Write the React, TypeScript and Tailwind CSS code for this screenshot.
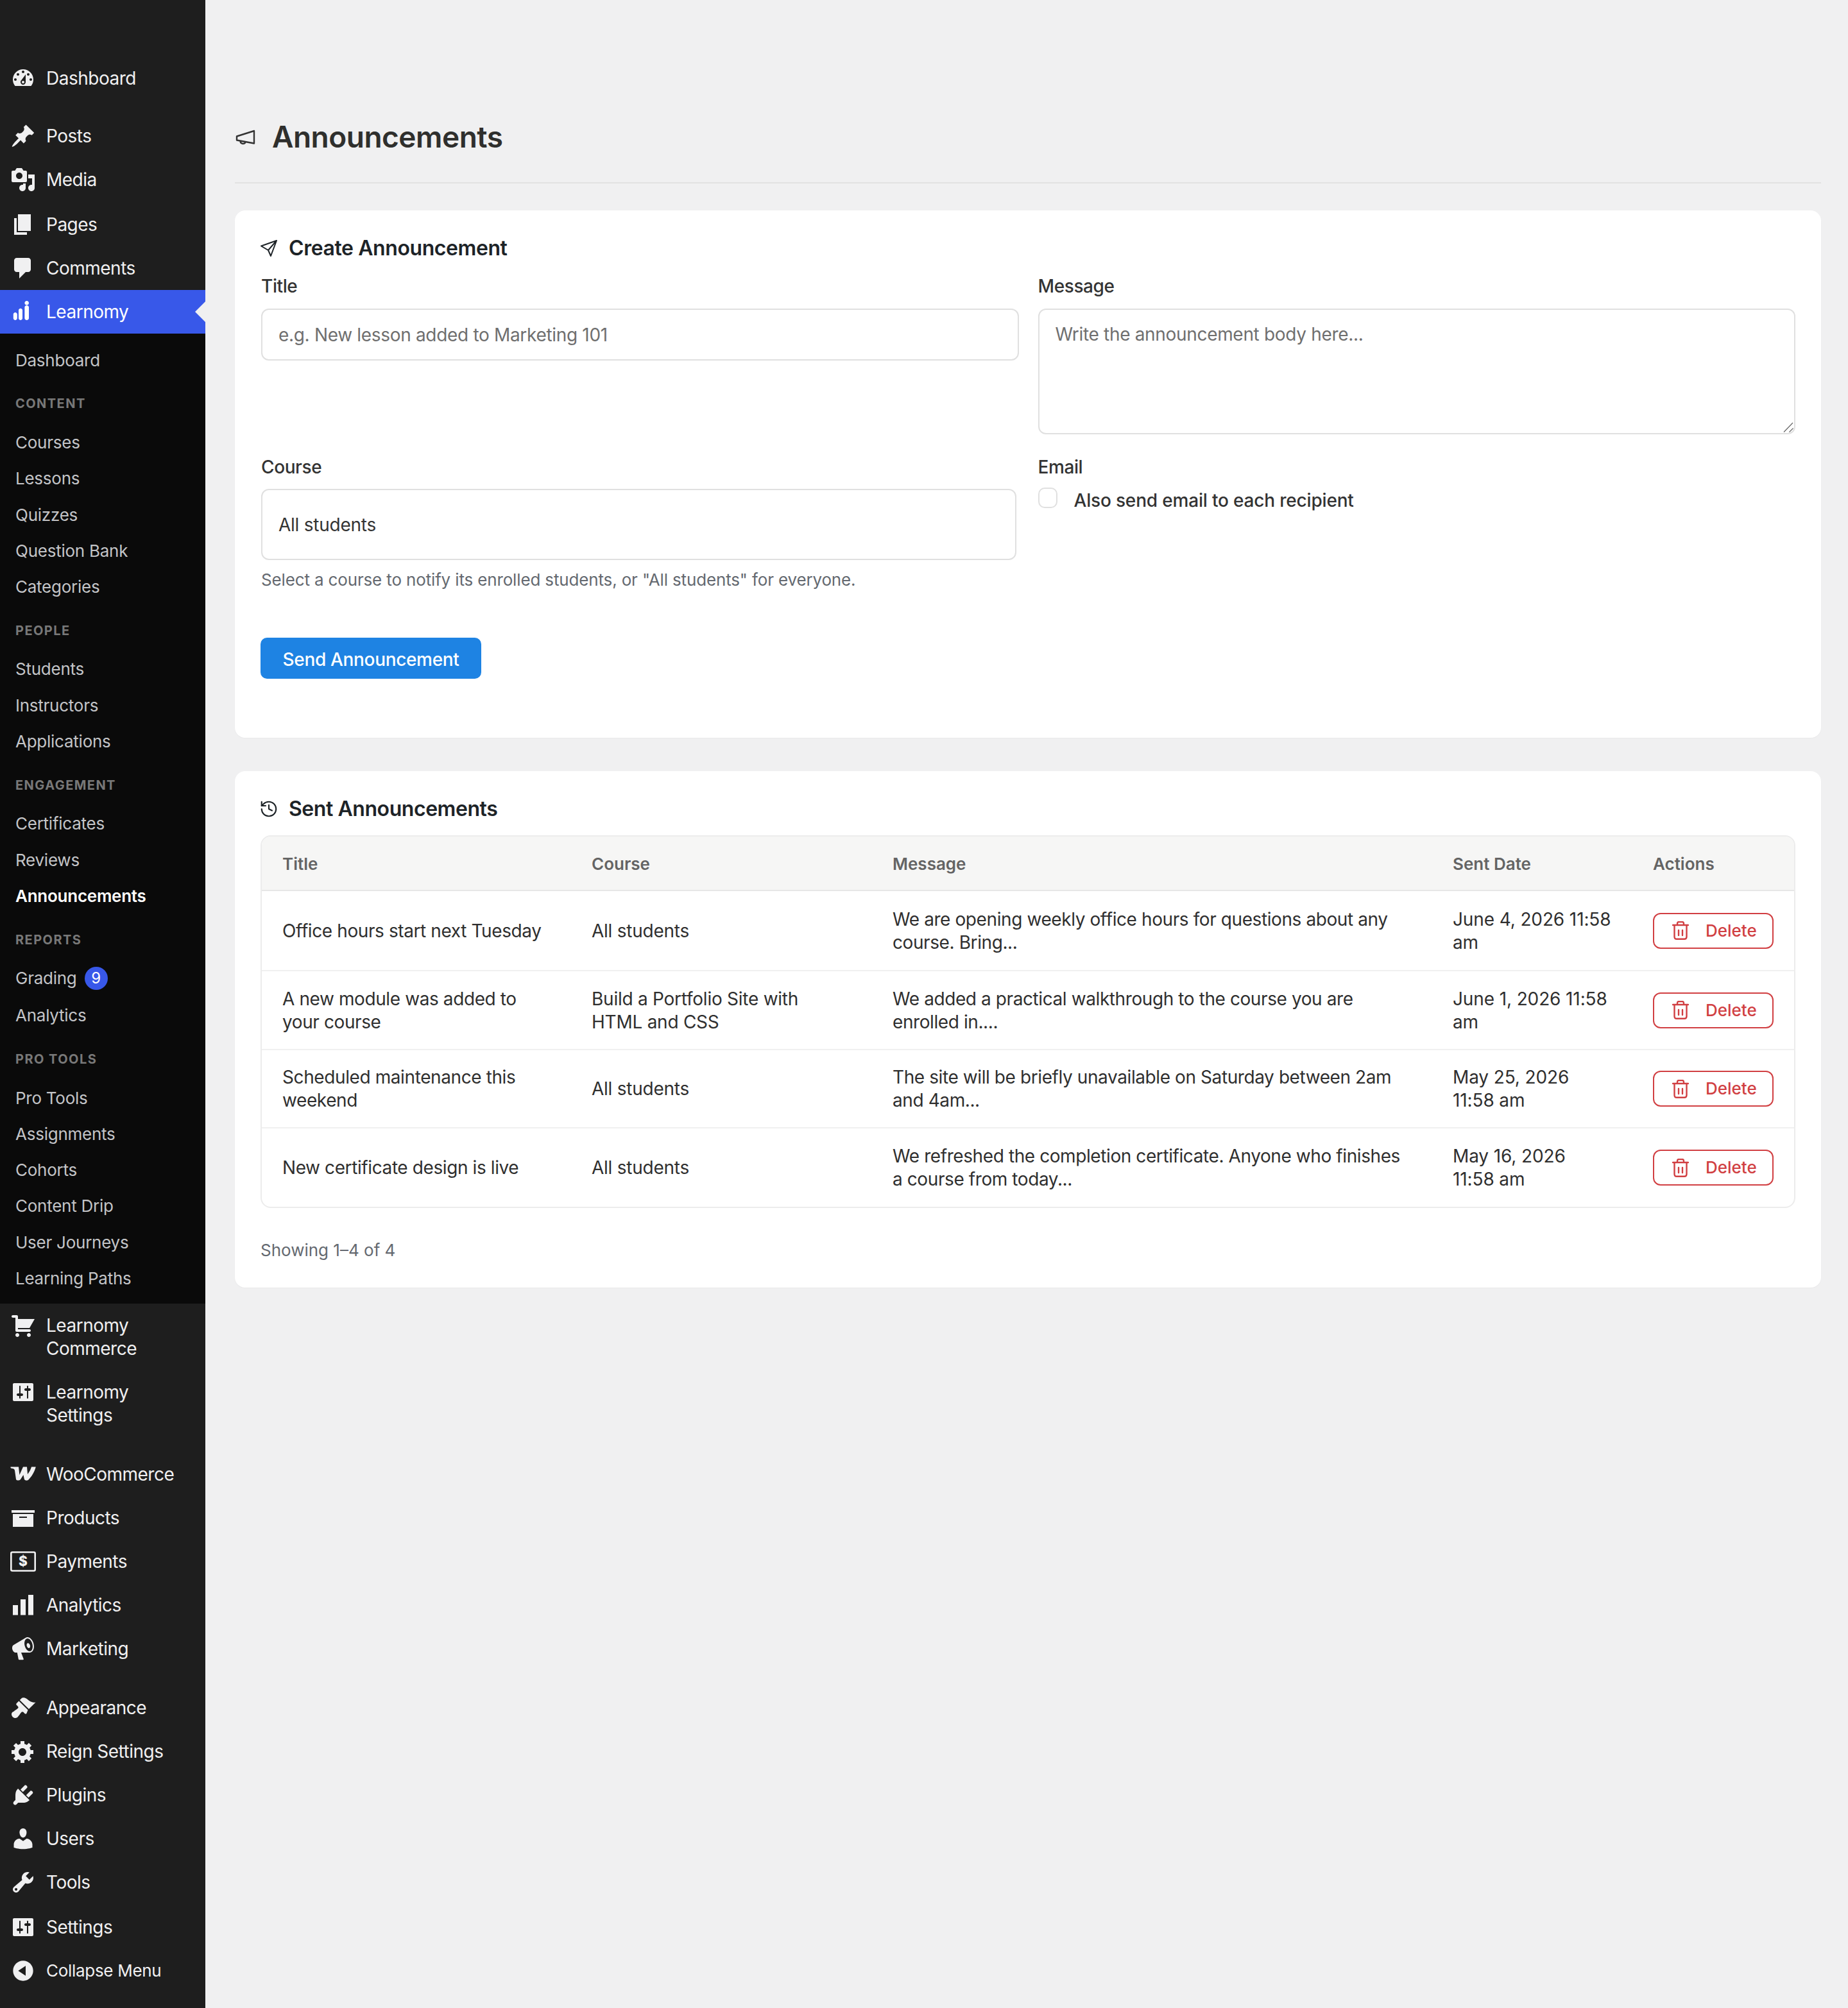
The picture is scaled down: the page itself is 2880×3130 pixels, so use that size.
import { History } from "lucide-react";
import type { ReactNode } from "react";

// dashicon-style glyphs on a 20x20 grid
const paths: Record<string, string> = {
  dashboard:
    "M3.76 16h12.48c1.1-1.37 1.76-3.11 1.76-5 0-4.42-3.58-8-8-8s-8 3.58-8 8c0 1.89.66 3.63 1.76 5zM10 4c.55 0 1 .45 1 1s-.45 1-1 1-1-.45-1-1 .45-1 1-1zM6 6c.55 0 1 .45 1 1s-.45 1-1 1-1-.45-1-1 .45-1 1-1zm8 0c.55 0 1 .45 1 1s-.45 1-1 1-1-.45-1-1 .45-1 1-1zm-5.37 5.55L12 7v6c0 1.1-.9 2-2 2s-2-.9-2-2c0-.57.24-1.08.63-1.45zM4 10c.55 0 1 .45 1 1s-.45 1-1 1-1-.45-1-1 .45-1 1-1zm12 0c.55 0 1 .45 1 1s-.45 1-1 1-1-.45-1-1 .45-1 1-1zm-5 3c0-.55-.45-1-1-1s-1 .45-1 1 .45 1 1 1 1-.45 1-1z",
  pin: "M10.44 3.02l1.82-1.82 6.36 6.35-1.83 1.82c-1.05-.68-2.48-.57-3.41.36l-.75.75c-.92.93-1.04 2.35-.35 3.41l-1.83 1.82-2.41-2.41-2.8 2.79c-.42.42-3.38 2.71-3.8 2.29s1.86-3.39 2.28-3.81l2.79-2.79L4.1 9.36l1.83-1.82c1.05.69 2.48.57 3.4-.36l.75-.75c.93-.92 1.05-2.35.36-3.41z",
  media:
    "M13 11V4c0-.55-.45-1-1-1h-1.67L9 1H5L3.67 3H2c-.55 0-1 .45-1 1v7c0 .55.45 1 1 1h10c.55 0 1-.45 1-1zM7 4.5c1.38 0 2.5 1.12 2.5 2.5S8.38 9.5 7 9.5 4.5 8.38 4.5 7 5.62 4.5 7 4.5zM14 6h5v10.5c0 1.38-1.12 2.5-2.5 2.5S14 17.88 14 16.5s1.12-2.5 2.5-2.5c.17 0 .34.02.5.05V9h-3V6zm-4 8.05V13h2v3.5c0 1.38-1.12 2.5-2.5 2.5S7 17.88 7 16.5 8.12 14 9.5 14c.17 0 .34.02.5.05z",
  page: "M6 15V2h10v13H6zm-1 1h8v2H3V5h2v11z",
  comment:
    "M5 2h9c1.1 0 2 .9 2 2v7c0 1.1-.9 2-2 2h-2l-5 5v-5H5c-1.1 0-2-.9-2-2V4c0-1.1.9-2 2-2z",
  learnomy:
    "M3.9 10.500c.8 0 1.500.7 1.500 1.500v3c0 .8-.7 1.500-1.500 1.500S2.400 15.800 2.400 15v-3c0-.8.7-1.500 1.500-1.500zM8 7.400c.8 0 1.500.7 1.500 1.500V15c0 .8-.7 1.500-1.500 1.500S6.500 15.800 6.500 15V8.900c0-.8.7-1.500 1.500-1.500zM12.850 5c.9 0 1.650.7 1.650 1.500V15c0 .8-.75 1.500-1.650 1.500S11.200 15.800 11.200 15V6.500c0-.8.75-1.500 1.650-1.500zM12.850 1.500c.9 0 1.650.7 1.650 1.600s-.75 1.600-1.650 1.600-1.650-.7-1.650-1.600.75-1.600 1.650-1.600z",
  cart: "M6 13h9c.55 0 1 .45 1 1s-.45 1-1 1H5c-.55 0-1-.45-1-1V4H2c-.55 0-1-.45-1-1s.45-1 1-1h3c.55 0 1 .45 1 1v2h13l-4 7H6v1zm-.5 3c.83 0 1.5.67 1.5 1.5S6.33 19 5.5 19 4 18.33 4 17.5 4.67 16 5.5 16zm9 0c.83 0 1.5.67 1.5 1.500s-.67 1.500-1.500 1.500-1.500-.67-1.500-1.500.67-1.500 1.500-1.500z",
  sliders:
    "M18 16V4c0-.55-.45-1-1-1H3c-.55 0-1 .45-1 1v12c0 .55.45 1 1 1h14c.55 0 1-.45 1-1zM8 11h1c.55 0 1 .45 1 1s-.45 1-1 1H8v1.500c0 .28-.22.5-.5.5s-.5-.22-.5-.5V13H6c-.55 0-1-.45-1-1s.45-1 1-1h1V5.500c0-.28.22-.5.5-.5s.5.22.5.5V11zm5-2h-1c-.55 0-1-.45-1-1s.45-1 1-1h1V5.500c0-.28.22-.5.5-.5s.5.22.5.5V7h1c.55 0 1 .45 1 1s-.45 1-1 1h-1v5.500c0 .28-.22.5-.5.5s-.5-.22-.5-.5V9z",
  woo: "M.3 4.200H6.500L7.200 10.500 10 4.200H13L13.500 10C15 8 16 6 16.500 4.200H19.900C19 8 16.500 12 14 14.500 13 15 11.500 15 11 14L10.200 10.500 8 14C7 15 5 15 4.500 14L3.500 7C3.300 6 2.500 5.500 1.500 5.500.5 5.500 0 4.800.3 4.200z",
  archive: "M19 4v2H1V4h18zM2 7h16v10H2V7zm11 3V9H7v1h6z",
  bars: "M2 10h4v7.750H2zM8 5.500h4v12.250H8zM14 2h4v15.750h-4z",
  megaphone:
    "M18.15 5.94c.46 1.62.38 3.22-.02 4.480-.42 1.280-1.260 2.180-2.300 2.480-.16.06-.26.06-.4.06-.6.1-.3.04-.4.04H8.500l1.900 5c.1.3-.1.6-.4.6H7c-.3 0-.5-.2-.6-.5l-1-5.100H4.250c-.5.06-1.080-.18-1.540-.62s-.88-1.080-1.060-1.860c-.24-.8-.2-1.560-.02-2.200.2-.62.58-1.080 1.060-1.300l9.020-5.420c.3-.2.480-.27.980-.46 1.040-.3 2.240.1 3.220.98s1.760 2.180 2.220 3.800zm-2.600 5.980c.4-.1.760-.34 1.060-.7.580-.7.860-1.760.860-3.040 0-.64-.1-1.300-.28-1.980-.34-1.360-1.020-2.500-1.780-3.240s-1.680-1.100-2.460-.88c-.82.22-1.400.96-1.700 2-.32 1.040-.28 2.360.06 3.720.38 1.360 1 2.500 1.800 3.240.78.74 1.620 1.100 2.440.88zM13.600 5.600c.7-.2 1.500.5 1.800 1.600s0 2.100-.7 2.300-1.500-.5-1.800-1.600 0-2.100.7-2.300z",
  brush:
    "M14.48 11.06L7.41 3.99l1.5-1.5c.5-.56 2.300-.47 3.510.32 1.210.8 1.430 1.280 2.910 2.100 1.180.64 2.450 1.260 4.450.85zm-.71.71L6.700 4.700 4.930 6.470c-.39.39-.39 1.020 0 1.410l1.060 1.060c.39.39.39 1.030 0 1.420-.6.6-1.430 1.110-2.210 1.690-.35.26-.7.53-1.010.84C1.430 13.250 1 14.070 1 15c0 1.660 1.340 3 3 3 .93 0 1.750-.43 2.250-1.360.31-.31.58-.66.84-1.010.58-.78 1.090-1.610 1.690-2.210.39-.39 1.030-.39 1.420 0l1.060 1.060c.39.39 1.020.39 1.410 0z",
  gear: "M18 12h-2.180c-.17.7-.44 1.350-.81 1.930l1.540 1.540-2.100 2.100-1.540-1.540c-.58.36-1.230.63-1.910.79V19H8v-2.180c-.68-.16-1.330-.43-1.910-.79l-1.540 1.540-2.120-2.120 1.540-1.540c-.36-.58-.63-1.230-.79-1.910H1V9.030h2.170c.16-.7.44-1.350.8-1.940L2.430 5.550l2.100-2.100 1.540 1.540c.58-.37 1.240-.64 1.930-.81V2h3v2.180c.68.16 1.330.43 1.910.79l1.540-1.540 2.120 2.120-1.540 1.540c.36.59.64 1.240.8 1.940H18V12zm-8.500 1.500c1.660 0 3-1.340 3-3s-1.340-3-3-3-3 1.340-3 3 1.340 3 3 3z",
  plug: "M13.110 4.360L9.870 7.600 8 5.730l3.240-3.240c.35-.34 1.050-.2 1.560.32.52.51.66 1.210.31 1.550zm-8 1.770l.91-1.120 9.010 9.010-1.190.84c-.71.71-2.630 1.160-3.820 1.160H6.140L4.900 17.260c-.59.59-1.540.59-2.120 0-.59-.58-.59-1.530 0-2.120l1.240-1.240v-3.880c0-1.130.4-3.190 1.090-3.890zm7.260 3.970l3.240-3.240c.34-.35 1.040-.21 1.550.31.52.51.66 1.210.31 1.550l-3.240 3.250z",
  user: "M10 9.250c-2.270 0-2.730-3.440-2.730-3.440C7 4.020 7.820 2 9.970 2c2.160 0 2.980 2.020 2.710 3.810 0 0-.41 3.440-2.680 3.440zm0 2.570L12.720 10c2.390 0 4.520 2.330 4.520 4.530v2.490s-3.650 1.130-7.240 1.130c-3.650 0-7.240-1.130-7.240-1.130v-2.490c0-2.250 1.940-4.480 4.470-4.480z",
  wrench:
    "M16.680 9.770c-1.340 1.340-3.300 1.670-4.950.99l-5.410 6.520c-.99.99-2.590.99-3.580 0s-.99-2.590 0-3.570l6.520-5.420c-.68-1.650-.35-3.610.99-4.950 1.280-1.280 3.120-1.620 4.720-1.060l-2.890 2.890 2.820 2.820 2.860-2.870c.53 1.580.18 3.390-1.080 4.670zM3.810 16.210c.4.39 1.040.39 1.430 0 .4-.4.4-1.040 0-1.430-.39-.4-1.030-.4-1.430 0-.39.39-.39 1.030 0 1.430z",
  collapse:
    "M10 2.160c4.330 0 7.840 3.510 7.840 7.840s-3.510 7.840-7.840 7.840S2.160 14.330 2.160 10 5.710 2.160 10 2.160zm2 11.720V6.120L6.180 9.970z",
};

function Dashicon({ name }: { name: string }) {
  return (
    <svg viewBox="0 0 20 20" className="w-[40px] h-[40px] shrink-0 fill-current">
      <path d={paths[name]} fillRule="evenodd" />
    </svg>
  );
}

function PaymentsIcon() {
  return (
    <svg viewBox="0 0 20 20" className="w-[40px] h-[40px] shrink-0">
      <rect x=".65" y="2.750" width="18.700" height="14.500" rx="1" fill="none" stroke="currentColor" strokeWidth="1.300" />
      <text x="10" y="13.700" textAnchor="middle" fontSize="10.500" fontWeight="800" fill="currentColor" fontFamily="Inter, sans-serif">
        $
      </text>
    </svg>
  );
}

function MenuItem({ icon, label, active, small }: { icon: ReactNode; label: ReactNode; active?: boolean; small?: boolean }) {
  return (
    <div className={`relative flex items-start pl-[16px] ${active ? "bg-[#3858e9] text-white" : "text-[#f0f0f1]"}`}>
      <span className="mt-[14px] flex">{icon}</span>
      <span
        className={`pl-[16px] py-[16px] leading-[36px] pr-[8px] max-w-[244px] ${small ? "text-[26px] tracking-[-0.3px]" : "text-[28px] tracking-[-0.5px]"}`}
      >
        {label}
      </span>
      {active && (
        <span className="absolute right-0 top-[18px] w-0 h-0 border-y-[16px] border-y-transparent border-r-[16px] border-r-[#f0f0f1]" />
      )}
    </div>
  );
}

function SubItem({ children, active, tall }: { children: ReactNode; active?: boolean; tall?: boolean }) {
  return (
    <div
      className={`px-[24px] flex items-center text-[26px] tracking-[-0.25px] gap-[12px] ${tall ? "h-[60px] -mt-[2px]" : "h-[56.300px]"} ${
        active ? "text-white font-semibold" : "text-[#c3c4c7]"
      }`}
    >
      {children}
    </div>
  );
}

function SubLabel({ children }: { children: ReactNode }) {
  return (
    <div className="px-[24px] pt-[25px] pb-[16px] leading-[31px] text-[20px] font-bold tracking-[1.450px] text-[#787878] uppercase">
      {children}
    </div>
  );
}

function Sidebar() {
  return (
    <aside className="w-[320px] shrink-0 bg-[#1e1e1e] pt-[88px] min-h-[3130px]">
      <MenuItem icon={<Dashicon name="dashboard" />} label="Dashboard" />
      <div className="h-[22px]" />
      <MenuItem icon={<Dashicon name="pin" />} label="Posts" />
      <MenuItem icon={<Dashicon name="media" />} label="Media" />
      <div className="h-[2px]" />
      <MenuItem icon={<Dashicon name="page" />} label="Pages" />
      <MenuItem icon={<Dashicon name="comment" />} label="Comments" />
      <MenuItem icon={<Dashicon name="learnomy" />} label="Learnomy" active />
      <div className="bg-[#0a0a0a] pt-[13px] h-[1512px]">
        <SubItem>Dashboard</SubItem>
        <SubLabel>Content</SubLabel>
        <SubItem>Courses</SubItem>
        <SubItem>Lessons</SubItem>
        <SubItem>Quizzes</SubItem>
        <SubItem>Question Bank</SubItem>
        <SubItem>Categories</SubItem>
        <SubLabel>People</SubLabel>
        <SubItem>Students</SubItem>
        <SubItem>Instructors</SubItem>
        <SubItem>Applications</SubItem>
        <SubLabel>Engagement</SubLabel>
        <SubItem>Certificates</SubItem>
        <SubItem>Reviews</SubItem>
        <SubItem active>Announcements</SubItem>
        <SubLabel>Reports</SubLabel>
        <SubItem tall>
          Grading
          <span className="w-[36px] h-[36px] rounded-full bg-[#3858e9] text-white text-[24px] flex items-center justify-center">9</span>
        </SubItem>
        <SubItem>Analytics</SubItem>
        <SubLabel>Pro Tools</SubLabel>
        <SubItem>Pro Tools</SubItem>
        <SubItem>Assignments</SubItem>
        <SubItem>Cohorts</SubItem>
        <SubItem>Content Drip</SubItem>
        <SubItem>User Journeys</SubItem>
        <SubItem>Learning Paths</SubItem>
      </div>
      <MenuItem icon={<Dashicon name="cart" />} label="Learnomy Commerce" />
      <MenuItem icon={<Dashicon name="sliders" />} label="Learnomy Settings" />
      <div className="h-[24px]" />
      <MenuItem icon={<Dashicon name="woo" />} label="WooCommerce" />
      <MenuItem icon={<Dashicon name="archive" />} label="Products" />
      <MenuItem icon={<PaymentsIcon />} label="Payments" />
      <MenuItem icon={<Dashicon name="bars" />} label="Analytics" />
      <MenuItem icon={<Dashicon name="megaphone" />} label="Marketing" />
      <div className="h-[24px]" />
      <MenuItem icon={<Dashicon name="brush" />} label="Appearance" />
      <MenuItem icon={<Dashicon name="gear" />} label="Reign Settings" />
      <MenuItem icon={<Dashicon name="plug" />} label="Plugins" />
      <MenuItem icon={<Dashicon name="user" />} label="Users" />
      <MenuItem icon={<Dashicon name="wrench" />} label="Tools" />
      <div className="h-[2px]" />
      <MenuItem icon={<Dashicon name="sliders" />} label="Settings" />
      <MenuItem icon={<Dashicon name="collapse" />} label="Collapse Menu" small />
    </aside>
  );
}

function TrashIcon() {
  return (
    <svg viewBox="0 0 26 29" className="w-[26px] h-[29px]" fill="none" stroke="currentColor" strokeWidth="2.400" strokeLinecap="round" strokeLinejoin="round">
      <path d="M1 6h24M8 6V3.500C8 2 9 1 10.500 1h5C17 1 18 2 18 3.500V6M3.500 6v18c0 2.200 1.300 3.800 3.500 3.800h12c2.200 0 3.500-1.600 3.500-3.800V6M10 14v8M16 14v8" />
    </svg>
  );
}

const rows = [
  {
    title: "Office hours start next Tuesday",
    course: "All students",
    message: "We are opening weekly office hours for questions about any course. Bring...",
    date: "June 4, 2026 11:58\nam",
    height: "h-[123px]",
  },
  {
    title: "A new module was added to your course",
    course: "Build a Portfolio Site with HTML and CSS",
    message: "We added a practical walkthrough to the course you are enrolled in....",
    date: "June 1, 2026 11:58\nam",
    height: "h-[123px]",
  },
  {
    title: "Scheduled maintenance this weekend",
    course: "All students",
    message: "The site will be briefly unavailable on Saturday between 2am and 4am...",
    date: "May 25, 2026\n11:58 am",
    height: "h-[122px]",
  },
  {
    title: "New certificate design is live",
    course: "All students",
    message: "We refreshed the completion certificate. Anyone who finishes a course from today...",
    date: "May 16, 2026\n11:58 am",
    height: "h-[124px]",
  },
];

function AnnouncementsTable() {
  const th = "text-left px-[32px] pt-[1px] h-[85px] text-[26px] font-semibold text-[#646464] border-b-2 border-[#e6e6e6]";
  return (
    <div className="border-2 border-[#ececec] rounded-[16px] overflow-hidden">
      <table className="w-full table-fixed border-separate border-spacing-0">
        <colgroup>
          <col className="w-[482px]" />
          <col className="w-[469px]" />
          <col className="w-[873px]" />
          <col className="w-[312px]" />
          <col />
        </colgroup>
        <thead className="bg-[#f6f6f5]">
          <tr>
            <th className={th}>Title</th>
            <th className={th}>Course</th>
            <th className={th}>Message</th>
            <th className={th}>Sent Date</th>
            <th className={th}>Actions</th>
          </tr>
        </thead>
        <tbody>
          {rows.map((r, i) => {
            const td = `px-[32px] ${r.height} text-[28px] leading-[36px] text-[#2f2f2f] align-middle ${i > 0 ? "border-t-2 border-[#f0f0f0]" : ""}`;
            return (
              <tr key={r.title}>
                <td className={`${td} tracking-[-0.4px]`}>{r.title}</td>
                <td className={`${td} tracking-[-0.25px]`}>{r.course}</td>
                <td className={`${td} tracking-[-0.41px]`}>{r.message}</td>
                <td className={`${td} tracking-[-0.12px] whitespace-pre-line`}>{r.date}</td>
                <td className={td}>
                  <button className="w-[188px] h-[56px] rounded-[12px] border-2 border-[#d13f42] text-[#d13f42] flex items-center gap-[26px] pl-[28px] text-[26px] font-medium">
                    <TrashIcon />
                    Delete
                  </button>
                </td>
              </tr>
            );
          })}
        </tbody>
      </table>
    </div>
  );
}

function Label({ children }: { children: ReactNode }) {
  return <div className="text-[28px] leading-[40px] font-medium tracking-[-0.4px] text-[#333333]">{children}</div>;
}

export default function App() {
  return (
    <div className="[font-family:Inter,sans-serif] flex min-h-[3130px] bg-[#f0f0f1] overflow-hidden">
      <Sidebar />
      <main className="flex-1 pl-[46px] pr-[42px]">
        <header className="pt-[184px] h-[286px] border-b-2 border-[#e2e2e2]">
          <div className="flex items-center gap-[25px] h-[60px]">
            <svg viewBox="0 0 32 32" className="w-[32px] h-[32px] text-[#333333] ml-[1px]" fill="none" stroke="currentColor" strokeWidth="2.400" strokeLinejoin="round">
              <path d="M2 14.500v6l27 5V6zM7.500 21.500c0 5.500 7.500 6 8 1.500" />
            </svg>
            <h1 className="text-[46px] leading-[60px] -mt-[2px] font-semibold tracking-[-0.5px] text-[#2f2f2d]">Announcements</h1>
          </div>
        </header>

        <section className="mt-[42px] h-[822px] bg-white rounded-[16px] pl-[40px] pr-[40px] pt-[37px] shadow-[0_1px_2px_rgba(0,0,0,0.03)]">
          <div className="flex items-center gap-[18px] h-[44px]">
            <svg viewBox="0 0 26 26" className="w-[26px] h-[26px] text-[#1d2327]" fill="none" stroke="currentColor" strokeWidth="2" strokeLinejoin="round" strokeLinecap="round">
              <path d="M25 1L1 9.500 12 16l4 9zM25 1L12 16" />
            </svg>
            <h2 className="text-[32px] leading-[44px] font-semibold tracking-[-0.42px] text-[#1d2327]">Create Announcement</h2>
          </div>
          <div className="grid grid-cols-2 gap-x-[30px] mt-[17px] ml-[1px]">
            <div>
              <Label>Title</Label>
              <input
                placeholder="e.g. New lesson added to Marketing 101"
                className="mt-[15px] w-full h-[81px] rounded-[12px] border-2 border-[#e0e0e0] px-[25px] text-[28px] tracking-[-0.32px] placeholder:text-[#6f6f6f] bg-white"
              />
            </div>
            <div>
              <Label>Message</Label>
              <div className="relative mt-[15px]">
                <textarea
                  placeholder="Write the announcement body here..."
                  className="block resize-none w-full h-[196px] rounded-[12px] border-2 border-[#e0e0e0] px-[25px] py-[20px] text-[28px] tracking-[-0.32px] leading-[36px] placeholder:text-[#6f6f6f] bg-white"
                />
                <svg viewBox="0 0 16 16" className="absolute right-[3px] bottom-[3px] w-[16px] h-[16px] text-[#666666]" fill="none" stroke="currentColor" strokeWidth="1.200">
                  <path d="M15 1L1 15.500M15.500 9.500L9.500 15.500" />
                </svg>
              </div>
            </div>
            <div className="mt-[31px]">
              <Label>Course</Label>
              <select className="mt-[14px] block appearance-none w-[1177px] h-[111px] rounded-[12px] border-2 border-[#e0e0e0] px-[25px] text-[28px] tracking-[-0.25px] text-[#333333] bg-white">
                <option>All students</option>
              </select>
              <p className="mt-[13px] text-[26px] leading-[36px] tracking-[-0.15px] text-[#646970]">
                Select a course to notify its enrolled students, or "All students" for everyone.
              </p>
            </div>
            <div className="mt-[31px]">
              <Label>Email</Label>
              <div className="flex items-start gap-[26px] mt-[12px]">
                <span className="w-[30px] h-[32px] rounded-[10px] border-2 border-[#e0e0e0] bg-white" />
                <span className="text-[28px] leading-[40px] font-medium tracking-[-0.18px] text-[#333333]">Also send email to each recipient</span>
              </div>
            </div>
          </div>
          <button className="mt-[72px] pt-[3px] h-[64px] w-[344px] rounded-[10px] bg-[#1e83e3] text-white text-[28px] tracking-[-0.33px] font-medium">
            Send Announcement
          </button>
        </section>

        <section className="mt-[52px] bg-white rounded-[16px] pl-[40px] pr-[40px] pt-[37px] pb-[40px] shadow-[0_1px_2px_rgba(0,0,0,0.03)]">
          <div className="flex items-center h-[44px] mb-[19px]">
            <History size={30} strokeWidth={1.7} className="text-[#1d2327] -ml-[2px] mr-[16px]" />
            <h2 className="text-[32px] leading-[44px] font-semibold tracking-[-0.44px] text-[#1d2327]">Sent Announcements</h2>
          </div>
          <AnnouncementsTable />
          <p className="mt-[48px] text-[26px] leading-[36px] text-[#646970]">Showing 1–4 of 4</p>
        </section>
      </main>
    </div>
  );
}
